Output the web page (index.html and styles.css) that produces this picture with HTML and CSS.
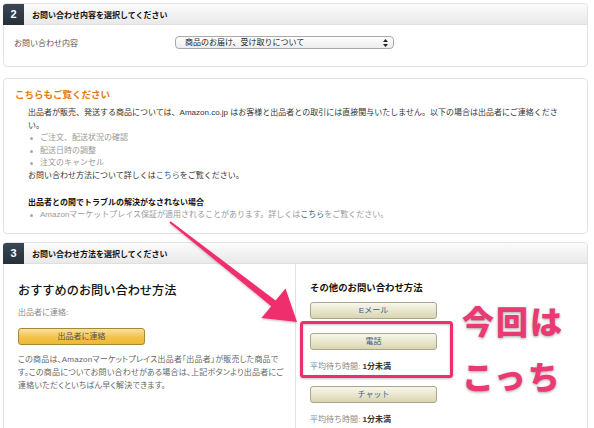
FILE: index.html
```html
<!doctype html>
<html lang="ja">
<head>
	<meta charset="UTF-8">
	<title>お問い合わせ</title>
	<link rel="stylesheet" href="styles.css">
</head>
<body>
<div class="page">
	<section class="box step">
		<div class="box-head"><span class="num">2</span><h2>お問い合わせ内容を選択してください</h2></div>
		<div class="topic-row">
			<span class="topic-label">お問い合わせ内容</span>
			<div class="select">商品のお届け、受け取りについて
				<svg class="updown" width="5" height="8" viewBox="0 0 5 8"><path d="M2.5 0 L5 3 L0 3 Z M2.5 8 L5 5 L0 5 Z" fill="#222"/></svg>
			</div>
		</div>
	</section>

	<section class="box notice">
		<h3 class="notice-title">こちらもご覧ください</h3>
		<div class="notice-text">
			<p>出品者が販売、発送する商品については、Amazon.co.jp はお客様と出品者との取引には直接関与いたしません。以下の場合は出品者にご連絡ください。</p>
			<ul class="grey-list">
				<li>ご注文、配送状況の確認</li>
				<li>配送日時の調整</li>
				<li>注文のキャンセル</li>
			</ul>
			<p>お問い合わせ方法について詳しくは<a href="#">こちら</a>をご覧ください。</p>
			<h4>出品者との間でトラブルの解決がなされない場合</h4>
			<ul class="grey-list">
				<li>Amazonマーケットプレイス保証が適用されることがあります。詳しくは<a href="#">こちら</a>をご覧ください。</li>
			</ul>
		</div>
	</section>

	<section class="box step">
		<div class="box-head"><span class="num">3</span><h2>お問い合わせ方法を選択してください</h2></div>
		<div class="methods">
			<div class="method-main">
				<h3>おすすめのお問い合わせ方法</h3>
				<p class="contact-label">出品者に連絡:</p>
				<a class="btn btn-orange" href="#">出品者に連絡</a>
				<p class="method-note">この商品は、Amazonマーケットプレイス出品者「出品者」が販売した商品です。この商品についてお問い合わせがある場合は、上記ボタンより出品者にご連絡いただくといちばん早く解決できます。</p>
			</div>
			<div class="method-other">
				<h3>その他のお問い合わせ方法</h3>
				<a class="btn btn-khaki" href="#">Eメール</a>
				<a class="btn btn-khaki phone" href="#">電話</a>
				<p class="wait">平均待ち時間: <b>1分未満</b></p>
				<a class="btn btn-khaki" href="#">チャット</a>
				<p class="wait">平均待ち時間: <b>1分未満</b></p>
			</div>
		</div>
	</section>

	<svg class="markup" width="594" height="428" viewBox="0 0 594 428">
		<defs>
			<filter id="shade" x="-10%" y="-10%" width="120%" height="120%">
				<feDropShadow dx="0" dy="1" stdDeviation="1" flood-color="#000" flood-opacity="0.25"/>
			</filter>
		</defs>
		<polygon filter="url(#shade)" fill="#ef2f6e" points="170.6,221.2 275.6,300.6 285.5,288.5 297,322 261.5,318 271.2,306.2 169.4,222.8"/>
		<rect filter="url(#shade)" x="301.5" y="322.5" width="150" height="54" rx="2" fill="none" stroke="#ef2f6e" stroke-width="3"/>
	</svg>
	<div class="callout">今回は<br>こっち</div>
</div>
</body>
</html>
```

FILE: styles.css
```css
*{
	margin:0;
	padding:0;
	box-sizing: border-box;
}
body {
	background: #fff;
	font-family: "Liberation Sans", "Noto Sans CJK JP", sans-serif;
	font-size: 8px;
	color: #333;
}
.page {
	position: relative;
	width: 594px;
	height: 428px;
	overflow: hidden;
	padding: 3px 6px 0 3px;
}
a {
	color: #2a6496;
	text-decoration: none;
}
.box {
	border: 1px solid #e2e2e2;
	border-radius: 4px;
	background: #fff;
}
.box-head {
	display: flex;
	align-items: center;
	height: 21px;
	background: linear-gradient(#fbfbfb, #e9e9e9);
	border-bottom: 1px solid #e0e0e0;
	border-radius: 3px 3px 0 0;
}
.num {
	width: 21px;
	height: 21px;
	margin: -1px 0 -1px -1px;
	background: linear-gradient(#3b4753, #25303a);
	color: #fff;
	font-weight: bold;
	font-size: 11px;
	line-height: 21px;
	text-align: center;
	border-radius: 3px 0 0 0;
}
.box-head h2 {
	margin-left: 8px;
	font-size: 8px;
	font-weight: bold;
	color: #111;
}

/* step 2 */
.topic-row {
	display: flex;
	align-items: center;
	padding: 11px 0 17px 10px;
}
.topic-label {
	width: 161px;
	color: #555;
}
.select {
	position: relative;
	width: 219px;
	height: 13px;
	padding-left: 9px;
	border: 1px solid #a9a9a9;
	border-radius: 4px;
	background: linear-gradient(#fff, #ececec);
	line-height: 11px;
	color: #222;
}
.updown {
	position: absolute;
	right: 5px;
	top: 2px;
}

/* notice */
.notice {
	margin-top: 11px;
	padding: 9px 10px 12px 11px;
}
.notice-title {
	font-size: 9.5px;
	line-height: 13px;
	color: #e47911;
}
.notice-text {
	padding: 6px 6px 0 13px;
	line-height: 12.6px;
}
.grey-list {
	list-style: none;
	color: #999;
}
.grey-list li {
	position: relative;
	padding-left: 12px;
}
.grey-list li::before {
	content: "";
	position: absolute;
	left: 2px;
	top: 5px;
	width: 3px;
	height: 3px;
	border-radius: 50%;
	background: #aaa;
}
.notice-text h4 {
	margin-top: 14px;
	font-size: 8px;
	line-height: 12px;
	color: #111;
}

/* step 3 */
.step + .notice + .step {
	margin-top: 8px;
}
.methods {
	display: flex;
	height: 200px;
}
.method-main {
	width: 292px;
	padding: 19px 10px 0 14px;
	border-right: 1px solid #e2e2e2;
}
.method-main h3 {
	font-size: 12.2px;
	line-height: 16px;
	font-weight: 500;
	color: #111;
}
.contact-label {
	margin-top: 8px;
	line-height: 12px;
	color: #888;
}
.btn {
	display: block;
	width: 127px;
	height: 17px;
	border-radius: 3px;
	text-align: center;
	line-height: 15px;
	font-size: 8px;
}
.btn-orange {
	margin-top: 9px;
	border: 1px solid #a88734;
	background: linear-gradient(#f9e0a3, #f2c24a 55%, #eeb933);
	color: #555;
}
.method-note {
	margin-top: 8px;
	line-height: 13px;
	color: #666;
	font-feature-settings: "palt";
	letter-spacing: 0.2px;
}
.method-other {
	flex: 1;
	padding: 17px 0 0 14px;
}
.method-other h3 {
	font-size: 9.4px;
	line-height: 13px;
	color: #111;
}
.btn-khaki {
	margin-top: 8px;
	border: 1px solid #aaa68c;
	background: linear-gradient(#f8f7ea, #e6e3c8 60%, #d9d5b3);
	color: #3b5e86;
}
.btn-khaki.phone {
	margin-top: 14px;
}
.wait {
	margin: 11px 0 13px;
	line-height: 12px;
	color: #888;
}
.wait b {
	color: #333;
}

/* annotations */
.markup {
	position: absolute;
	left: 0;
	top: 0;
	pointer-events: none;
}
.callout {
	position: absolute;
	left: 462px;
	top: 293px;
	font-family: "Noto Sans CJK JP", sans-serif;
	font-size: 32px;
	font-weight: 900;
	line-height: 55px;
	letter-spacing: 2px;
	color: #ea3a74;
	-webkit-text-stroke: 5px #fff;
	paint-order: stroke fill;
	text-shadow: 0 1px 3px rgba(0,0,0,.35);
}
```
